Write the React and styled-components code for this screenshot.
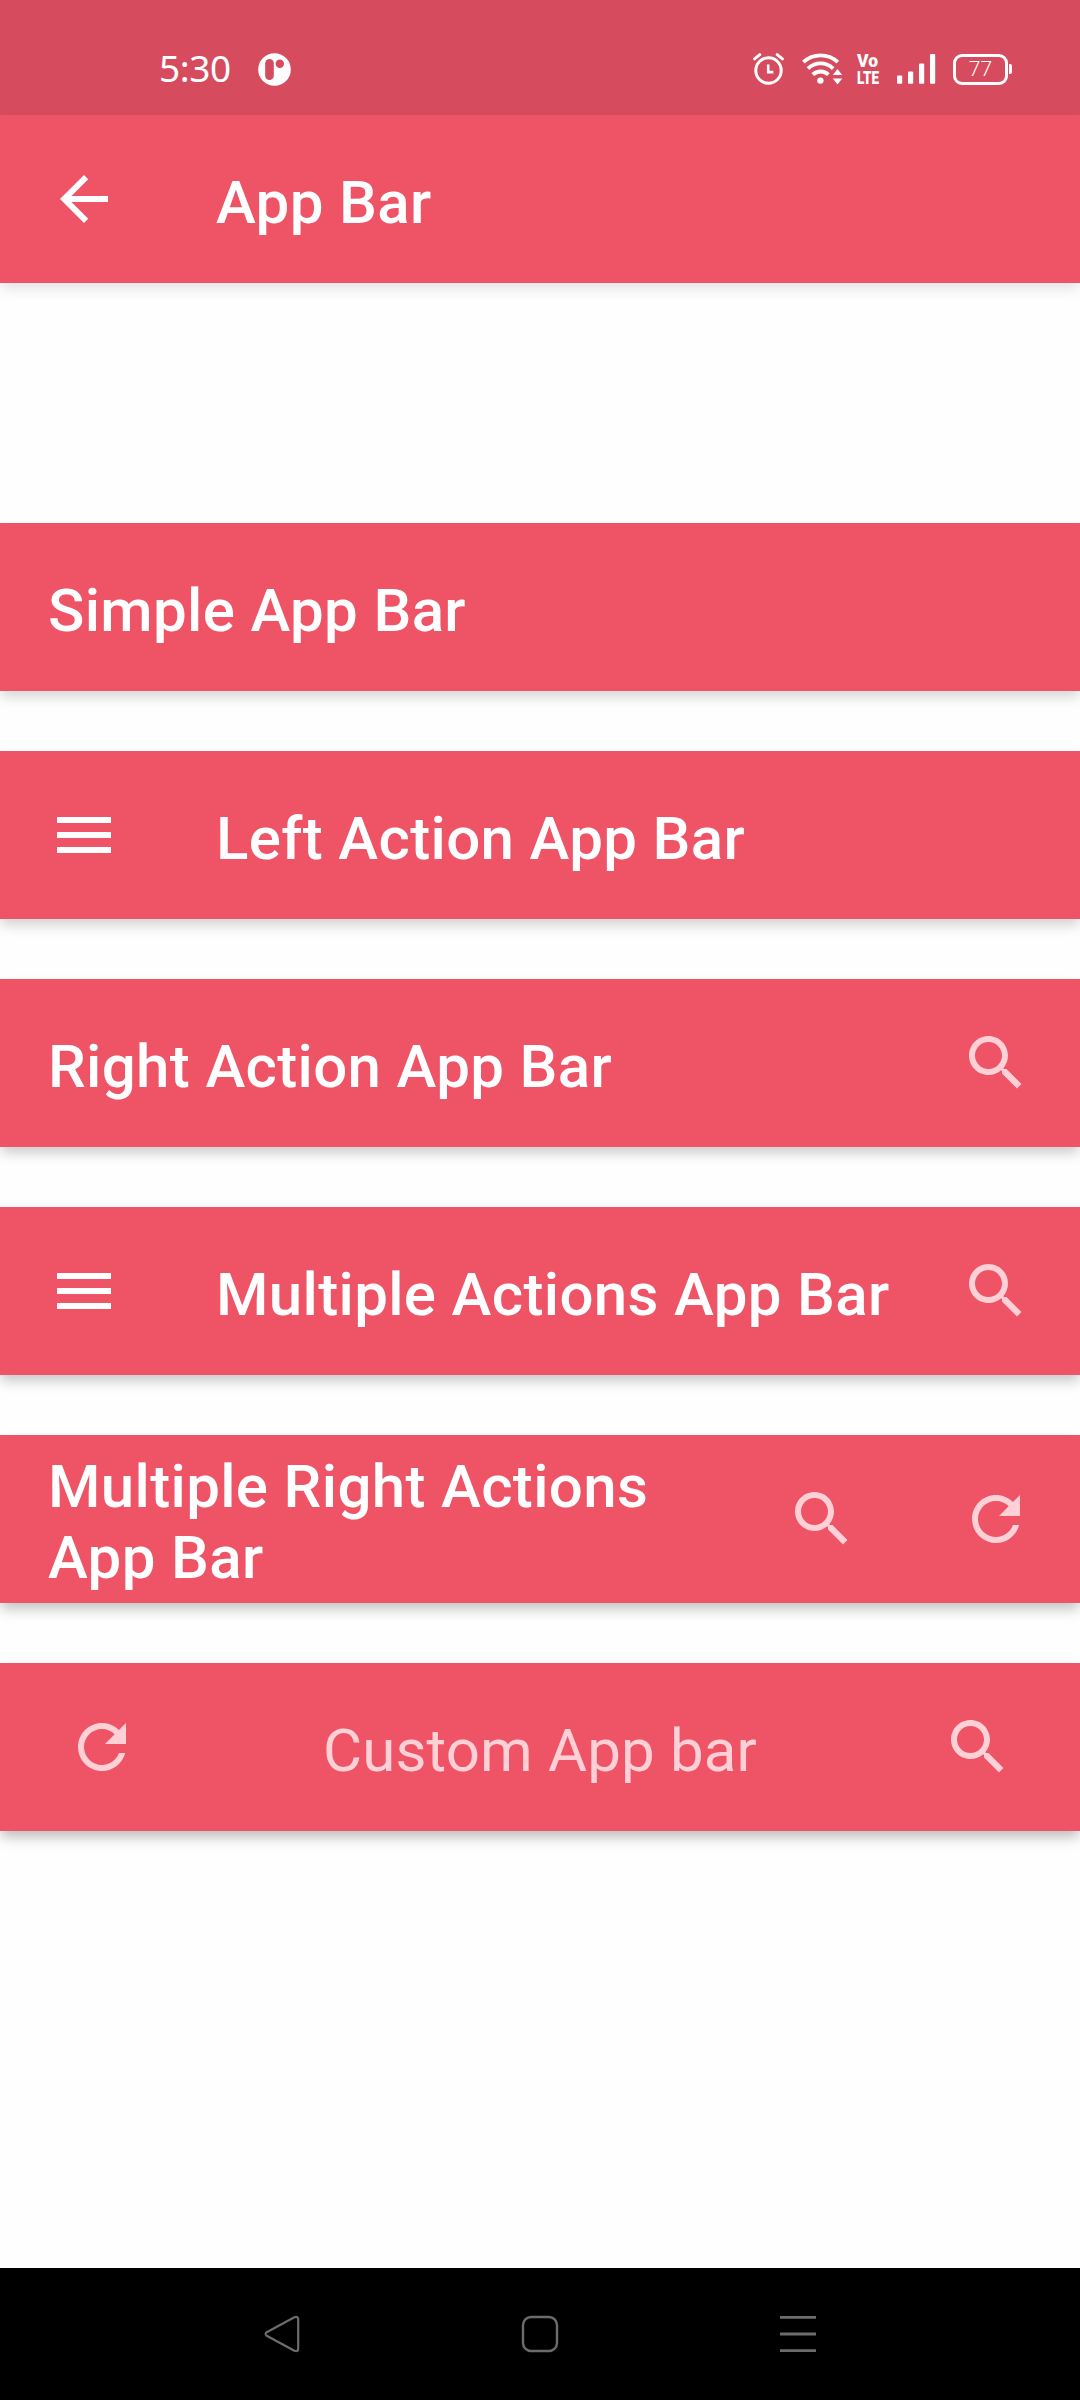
import React from "react";
import styled, { createGlobalStyle } from "styled-components";

const RED = "#ef5366";
const STATUS = "#d64b5d";
const SOFT = "#ffd0d6";

const GlobalStyle = createGlobalStyle`
  *, *::before, *::after { box-sizing: border-box; }
  body { margin: 0; background: #fefefe; font-family: Roboto, "Liberation Sans", sans-serif; }
`;

const Screen = styled.div`
  display: flex;
  flex-direction: column;
  width: 1080px;
  height: 2400px;
  background: #fefefe;
  overflow: hidden;
`;

const StatusBar = styled.header`
  flex: none;
  display: flex;
  align-items: center;
  justify-content: space-between;
  height: 115px;
  padding: 23px 68px 0 159px;
  background: ${STATUS};
  color: #fff;
`;

const StatusGroup = styled.div`
  display: flex;
  align-items: center;
  gap: ${(p) => p.$gap}px;
`;

const Clock = styled.span`
  padding-bottom: 2px;
  font-family: "Noto Sans", "Open Sans", sans-serif;
  font-size: 37px;
  line-height: 50px;
  letter-spacing: -0.4px;
`;

const Glyph = styled.svg`
  display: block;
  flex: none;
  overflow: visible;
`;

const WifiGlyph = styled(Glyph)`
  margin-right: -4px;
`;

const Battery = styled.div`
  display: flex;
  align-items: center;
  gap: 1px;
`;

const BatteryShell = styled.div`
  display: flex;
  align-items: center;
  justify-content: center;
  width: 55px;
  height: 31px;
  border: 3px solid #fff;
  border-radius: 9px;
  font-size: 21px;
  font-weight: 300;
  line-height: 25px;
  color: #fff;
`;

const BatteryTip = styled.div`
  width: 3px;
  height: 10px;
  border-radius: 0 2px 2px 0;
  background: #fff;
`;

const Bar = styled.div`
  flex: none;
  display: flex;
  align-items: center;
  justify-content: ${(p) => (p.$spread ? "space-between" : "flex-start")};
  height: 168px;
  padding: 0 ${(p) => (p.$spread ? 66 : 48)}px;
  background: ${RED};
  box-shadow: 0 7px 12px -1px rgba(0, 0, 0, ${(p) => p.$shade});
`;

const Title = styled.h1`
  flex: ${(p) => (p.$muted ? "none" : 1)};
  margin: 0 ${(p) => (p.$muted ? 0 : 48)}px 0 ${(p) => (p.$indent ? 96 : 0)}px;
  padding-top: 6px;
  font-size: 60px;
  font-weight: ${(p) => (p.$muted ? 400 : 500)};
  line-height: 71px;
  letter-spacing: ${(p) => (p.$muted ? 0.15 : 0.35)}px;
  color: ${(p) => (p.$muted ? SOFT : "#fff")};
`;

const Actions = styled.div`
  display: flex;
  gap: 102px;
`;

const IconButton = styled.button`
  flex: none;
  display: flex;
  width: 72px;
  height: 72px;
  padding: 0;
  border: 0;
  background: none;
  color: ${(p) => (p.$soft ? SOFT : "#fff")};
`;

const Content = styled.main`
  flex: 1;
  display: flex;
  flex-direction: column;
  gap: 60px;
  padding-top: 240px;
`;

const NavBar = styled.nav`
  flex: none;
  display: flex;
  align-items: center;
  justify-content: space-between;
  height: 132px;
  padding: 0 262px;
  background: #000;
`;

const PATHS = {
  back: "M20 11H7.83l5.59-5.59L12 4l-8 8 8 8 1.41-1.41L7.83 13H20v-2z",
  menu: "M3 18h18v-2H3v2zm0-5h18v-2H3v2zm0-7v2h18V6H3z",
  search:
    "M15.5 14h-.79l-.28-.27C15.41 12.59 16 11.11 16 9.5 16 5.91 13.09 3 9.5 3S3 5.91 3 9.5 5.91 16 9.5 16c1.61 0 3.09-.59 4.23-1.57l.27.28v.79l5 4.99L20.49 19l-4.99-5zm-6 0C7.01 14 5 11.99 5 9.5S7.01 5 9.5 5 14 7.01 14 9.5 11.99 14 9.5 14z",
  refresh:
    "M17.65 6.35C16.2 4.9 14.21 4 12 4c-4.42 0-7.99 3.58-7.99 8s3.57 8 7.99 8c3.73 0 6.84-2.55 7.73-6h-2.08c-.82 2.33-3.04 4-5.65 4-3.31 0-6-2.69-6-6s2.69-6 6-6c1.66 0 3.14.69 4.22 1.78L13 11h7V4l-2.35 2.35z",
};

function Action({ name, soft }) {
  return (
    <IconButton $soft={soft} aria-label={name}>
      <Glyph width="72" height="72" viewBox="0 0 24 24" fill="currentColor">
        <path d={PATHS[name]} />
      </Glyph>
    </IconButton>
  );
}

function AppBar({ title, left, right = [], shade }) {
  return (
    <Bar $shade={shade}>
      {left && <Action name={left} />}
      <Title $indent={Boolean(left)}>{title}</Title>
      {right.length > 0 && (
        <Actions>
          {right.map((name) => (
            <Action key={name} name={name} soft />
          ))}
        </Actions>
      )}
    </Bar>
  );
}

function Status() {
  return (
    <StatusBar>
      <StatusGroup $gap={27}>
        <Clock>5:30</Clock>
        <Glyph width="33" height="33" viewBox="0 0 33 33">
          <circle cx="16.5" cy="16.5" r="16.3" fill="#fff" />
          <rect x="7.2" y="6" width="8.6" height="21" rx="4.3" fill={STATUS} />
          <circle cx="21.8" cy="10.8" r="4.2" fill={STATUS} />
        </Glyph>
      </StatusGroup>
      <StatusGroup $gap={18}>
        <Glyph width="31" height="32" viewBox="0 0 31 32" fill="none" stroke="#fff" strokeWidth="3">
          <circle cx="15.5" cy="17.5" r="12.7" />
          <path d="M15.2 11.5v7.6h5.2" strokeWidth="2.6" />
          <path d="M1.6 5.8 6.8 1.6M29.4 5.8 24.2 1.6" strokeLinecap="round" />
        </Glyph>
        <WifiGlyph width="41" height="32" viewBox="0 0 41 32" fill="none" stroke="#fff" strokeWidth="3.8">
          <path d="M1.4 9.2a25 25 0 0 1 34.4 0M6 15.6a18 18 0 0 1 25.2 0M10.8 21.6a11.3 11.3 0 0 1 15.6 0" />
          <circle cx="18.4" cy="27.6" r="3.2" fill="#fff" stroke="none" />
          <path d="M30.8 22 35.5 16l4.7 6zM30.8 25.6h9.4l-4.7 6z" fill="#fff" stroke="none" />
        </WifiGlyph>
        <Glyph width="22" height="32" viewBox="0 0 22 32" fill="#fff" fontFamily="Roboto" fontWeight="900" fontSize="18">
          <text>
            <tspan x="0" y="14.4" textLength="21" lengthAdjust="spacingAndGlyphs">Vo</tspan>
            <tspan x="0" y="30.8" textLength="22" lengthAdjust="spacingAndGlyphs">LTE</tspan>
          </text>
        </Glyph>
        <Glyph width="38" height="32" viewBox="0 0 38 32" fill="#fff">
          <rect x="0" y="22.5" width="5.2" height="8.3" rx="1" />
          <rect x="11" y="18.5" width="5.2" height="12.3" rx="1" />
          <rect x="22" y="10.5" width="5.2" height="20.3" rx="1" />
          <rect x="33" y="1" width="5.2" height="29.8" rx="1" />
        </Glyph>
        <Battery>
          <BatteryShell>77</BatteryShell>
          <BatteryTip />
        </Battery>
      </StatusGroup>
    </StatusBar>
  );
}

export default function App() {
  return (
    <Screen>
      <GlobalStyle />
      <Status />
      <AppBar title="App Bar" left="back" shade={0.1} />
      <Content>
        <AppBar title="Simple App Bar" shade={0.16} />
        <AppBar title="Left Action App Bar" left="menu" shade={0.18} />
        <AppBar title="Right Action App Bar" right={["search"]} shade={0.2} />
        <AppBar title="Multiple Actions App Bar" left="menu" right={["search"]} shade={0.22} />
        <AppBar title="Multiple Right Actions App Bar" right={["search", "refresh"]} shade={0.24} />
        <Bar $spread $shade={0.26}>
          <Action name="refresh" soft />
          <Title as="div" $muted>Custom App bar</Title>
          <Action name="search" soft />
        </Bar>
      </Content>
      <NavBar>
        <Glyph width="40" height="40" viewBox="0 0 40 40" fill="none" stroke="#6c6c6c" strokeWidth="2.2" strokeLinejoin="round">
          <path d="M4.7 18.2 32.4 3.2q3.8-1.2 3.8 2.4v28.8q0 3.6-3.8 2.4L4.7 21.8q-2.2-1.8 0-3.6z" />
        </Glyph>
        <Glyph width="40" height="40" viewBox="0 0 40 40" fill="none" stroke="#6c6c6c" strokeWidth="2.4">
          <rect x="3" y="3" width="34" height="34" rx="8" />
        </Glyph>
        <Glyph width="40" height="40" viewBox="0 0 40 40" stroke="#6c6c6c" strokeWidth="2.8">
          <path d="M2 3.4h36M2 20h36M2 36.6h36" />
        </Glyph>
      </NavBar>
    </Screen>
  );
}
